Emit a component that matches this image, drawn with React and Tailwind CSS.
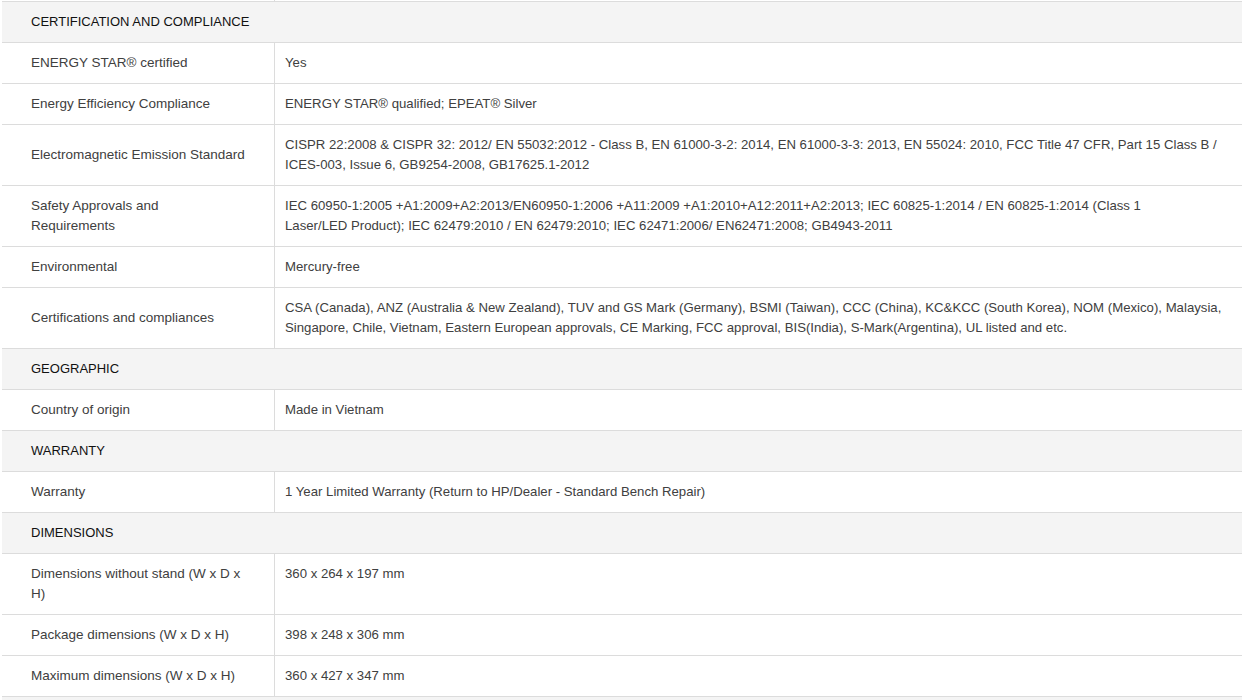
const sections = [
  {
    title: 'CERTIFICATION AND COMPLIANCE',
    rows: [
      ['ENERGY STAR® certified', ['Yes']],
      ['Energy Efficiency Compliance', ['ENERGY STAR® qualified; EPEAT® Silver']],
      [
        'Electromagnetic Emission Standard',
        [
          'CISPR 22:2008 & CISPR 32: 2012/ EN 55032:2012 - Class B, EN 61000-3-2: 2014, EN 61000-3-3: 2013, EN 55024: 2010, FCC Title 47 CFR, Part 15 Class B /',
          'ICES-003, Issue 6, GB9254-2008, GB17625.1-2012',
        ],
      ],
      [
        'Safety Approvals and Requirements',
        [
          'IEC 60950-1:2005 +A1:2009+A2:2013/EN60950-1:2006 +A11:2009 +A1:2010+A12:2011+A2:2013; IEC 60825-1:2014 / EN 60825-1:2014 (Class 1',
          'Laser/LED Product); IEC 62479:2010 / EN 62479:2010; IEC 62471:2006/ EN62471:2008; GB4943-2011',
        ],
      ],
      ['Environmental', ['Mercury-free']],
      [
        'Certifications and compliances',
        [
          'CSA (Canada), ANZ (Australia & New Zealand), TUV and GS Mark (Germany), BSMI (Taiwan), CCC (China), KC&KCC (South Korea), NOM (Mexico), Malaysia,',
          'Singapore, Chile, Vietnam, Eastern European approvals, CE Marking, FCC approval, BIS(India), S-Mark(Argentina), UL listed and etc.',
        ],
      ],
    ],
  },
  {
    title: 'GEOGRAPHIC',
    rows: [['Country of origin', ['Made in Vietnam']]],
  },
  {
    title: 'WARRANTY',
    rows: [['Warranty', ['1 Year Limited Warranty (Return to HP/Dealer - Standard Bench Repair)']]],
  },
  {
    title: 'DIMENSIONS',
    rows: [
      ['Dimensions without stand (W x D x H)', ['360 x 264 x 197 mm']],
      ['Package dimensions (W x D x H)', ['398 x 248 x 306 mm']],
      ['Maximum dimensions (W x D x H)', ['360 x 427 x 347 mm']],
    ],
  },
];

function SectionHeader({ title }) {
  return (
    <div className="bg-[#f4f4f4] border-b border-[#dcdcdc] pl-[29px] py-[10px] text-[13px] text-[#111] leading-5">
      {title || '\u00a0'}
    </div>
  );
}

function SpecRow({ label, lines }) {
  return (
    <div className="flex border-b border-[#dcdcdc] text-[#404040] leading-5">
      <div className="w-[272px] shrink-0 flex items-center pl-[29px] pr-[29px] py-[10px]">
        <span>{label}</span>
      </div>
      <div className="flex-1 border-l border-[#dcdcdc] pl-[10px] pr-1 py-[10px] text-[13.2px]">
        {lines.map((line) => (
          <div key={line} className="whitespace-nowrap">{line}</div>
        ))}
      </div>
    </div>
  );
}

export default function App() {
  return (
    <div className="bg-white min-h-screen pl-[2px] pr-[4px] text-[13.5px]" style={{ fontFamily: '"Liberation Sans", Arial, sans-serif' }}>
      <div className="flex h-px">
        <div className="w-[272px]"></div>
        <div className="border-l border-[#dcdcdc]"></div>
      </div>
      <div className="border-t border-[#dcdcdc]">
        {sections.map((s) => (
          <div key={s.title}>
            <SectionHeader title={s.title} />
            {s.rows.map(([label, lines]) => (
              <SpecRow key={label} label={label} lines={lines} />
            ))}
          </div>
        ))}
        <SectionHeader title="" />
      </div>
    </div>
  );
}
